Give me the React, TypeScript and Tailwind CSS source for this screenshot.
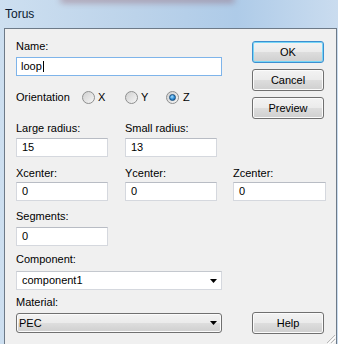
import React from "react";

const font = { fontFamily: '"Liberation Sans", Arial, sans-serif' };

const btnBg =
  "bg-[linear-gradient(to_bottom,#f3f3f3_0%,#ebebeb_48%,#dddddd_52%,#cfcfcf_100%)]";

const Label = ({ children, className = "" }: { children: React.ReactNode; className?: string }) => (
  <div className={`h-[13px] text-[11px] leading-[13px] text-black ${className}`}>{children}</div>
);

const TextBox = ({ value, className = "" }: { value: string; className?: string }) => (
  <div
    className={`flex h-[19px] items-center border border-[#d5d8de] border-t-[#b8bcc4] bg-white pl-[5px] text-[11px] text-black ${className}`}
  >
    {value}
  </div>
);

const Button = ({ children, focused = false, className = "" }: { children: React.ReactNode; focused?: boolean; className?: string }) => (
  <div
    className={`flex h-[22px] w-[72px] items-center justify-center rounded-[3px] border text-[11px] text-black ${btnBg} ${
      focused
        ? "border-[#3c8fd0] shadow-[inset_0_0_0_1px_#78d6f6]"
        : "border-[#707070] shadow-[inset_0_0_0_1px_#fbfbfb]"
    } ${className}`}
  >
    {children}
  </div>
);

const Arrow = () => (
  <svg width="7" height="4" viewBox="0 0 7 4" className="shrink-0">
    <path d="M0 0h7L3.5 4z" fill="#000" />
  </svg>
);

const Radio = ({ checked = false }: { checked?: boolean }) => (
  <div className="flex h-[13px] w-[13px] items-center justify-center rounded-full border border-[#8e8f8f] bg-[linear-gradient(135deg,#d0d0d0,#f6f6f6)]">
    {checked && (
      <div className="h-[7px] w-[7px] rounded-full border border-[#1a4f7f] bg-[radial-gradient(circle_at_40%_35%,#a9e0ff,#2a8ad4_55%,#0d4f8a)]" />
    )}
  </div>
);

export default function App() {
  return (
    <div
      style={font}
      className="relative flex h-[344px] w-[338px] flex-col overflow-hidden bg-[linear-gradient(to_right,#cddff0,#bcd3ea_40%,#aecbe8_70%,#cadcef)]"
    >
      <div className="pointer-events-none absolute left-[60px] top-[-4px] h-[7px] w-[175px] rounded-full bg-[#8a4a55] opacity-40 blur-[3px]" />
      <div className="relative flex h-[28px] shrink-0 items-center pl-[5px] text-[12px] text-[#0b1a30]">
        Torus
      </div>

      <div className="relative ml-[4px] mr-[1px] flex-1 border-x border-t border-[#6d7a88] bg-[#f0f0f0] pl-[11px]">
        <div className="flex">
          <div className="w-[206px]">
            <Label className="mt-[11px]">Name:</Label>
            <div className="mt-[4px] flex h-[19px] items-center border border-[#7eb4ea] bg-white pl-[4px] text-[11px] text-black">
              loop
              <span className="ml-[1px] h-[11px] w-px bg-black" />
            </div>
            <div className="mt-[15px] flex h-[13px] items-center text-[11px] text-black">
              <span className="w-[66px]">Orientation</span>
              <Radio />
              <span className="ml-[3px] w-[27px]">X</span>
              <Radio />
              <span className="ml-[3px] w-[25px]">Y</span>
              <Radio checked />
              <span className="ml-[4px]">Z</span>
            </div>
          </div>
          <div className="ml-[30px] mt-[12px] flex flex-col gap-[6px]">
            <Button focused>OK</Button>
            <Button>Cancel</Button>
            <Button>Preview</Button>
          </div>
        </div>

        <div className="mt-[3px] flex">
          <div className="w-[92px]">
            <Label>Large radius:</Label>
            <TextBox value="15" className="mt-[3px]" />
          </div>
          <div className="ml-[17px] w-[92px]">
            <Label>Small radius:</Label>
            <TextBox value="13" className="mt-[3px]" />
          </div>
        </div>

        <div className="mt-[10px] flex">
          <div className="w-[92px]">
            <Label>Xcenter:</Label>
            <TextBox value="0" className="mt-[2px]" />
          </div>
          <div className="ml-[17px] w-[92px]">
            <Label>Ycenter:</Label>
            <TextBox value="0" className="mt-[2px]" />
          </div>
          <div className="ml-[16px] w-[93px]">
            <Label>Zcenter:</Label>
            <TextBox value="0" className="mt-[2px]" />
          </div>
        </div>

        <div className="mt-[9px] w-[92px]">
          <Label>Segments:</Label>
          <TextBox value="0" className="mt-[4px]" />
        </div>

        <div className="mt-[7px] flex items-end">
          <div className="w-[206px]">
            <Label>Component:</Label>
            <div className="mt-[5px] flex h-[19px] items-center justify-between border border-[#d5d8de] border-t-[#c4c8ce] bg-white pl-[5px] pr-[4px] text-[11px] text-black">
              component1
              <Arrow />
            </div>
            <Label className="mt-[6px]">Material:</Label>
            <div
              className={`mt-[4px] flex h-[20px] items-center justify-between rounded-[3px] border border-[#707070] pl-[2px] pr-[4px] text-[11px] text-black shadow-[inset_0_0_0_1px_#fbfbfb] ${btnBg}`}
            >
              PEC
              <Arrow />
            </div>
          </div>
          <Button className="mb-[-1px] ml-[30px] h-[21px]">Help</Button>
        </div>

        <svg width="12" height="12" viewBox="0 0 12 12" className="absolute bottom-0 right-0">
          <path d="M11 3L3 11M11 7L7 11" stroke="#b8b8b8" strokeWidth="1" />
          <path d="M12 4L4 12M12 8L8 12" stroke="#ffffff" strokeWidth="1" />
        </svg>
      </div>
    </div>
  );
}
